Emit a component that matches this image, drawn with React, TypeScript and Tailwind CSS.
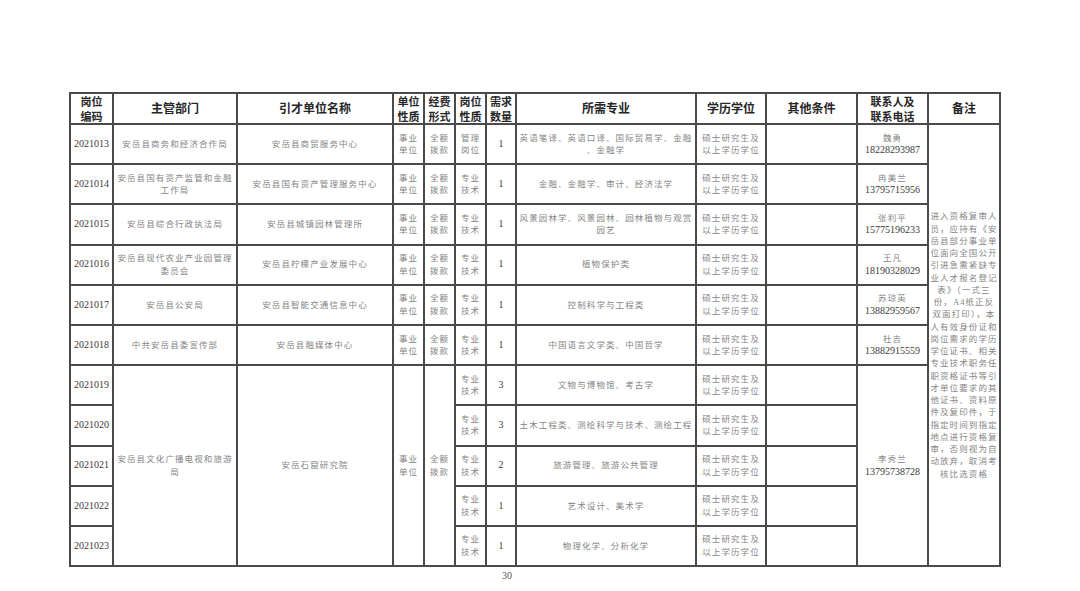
import React from 'react';

type Row = {
  code: string;
  dept?: React.ReactNode;
  unit?: string;
  kind: string;
  qty: string;
  major: React.ReactNode;
  contact?: [string, string];
};

const rows: Row[] = [
  { code: '2021013', dept: '安岳县商务和经济合作局', unit: '安岳县商贸服务中心', kind: '管理|岗位', qty: '1', major: <>英语笔译、英语口译、国际贸易学、金融<br />、金融学</>, contact: ['魏勇', '18228293987'] },
  { code: '2021014', dept: <>安岳县国有资产监管和金融<br />工作局</>, unit: '安岳县国有资产管理服务中心', kind: '专业|技术', qty: '1', major: '金融、金融学、审计、经济法学', contact: ['冉美兰', '13795715956'] },
  { code: '2021015', dept: '安岳县综合行政执法局', unit: '安岳县城镇园林管理所', kind: '专业|技术', qty: '1', major: <>风景园林学、风景园林、园林植物与观赏<br />园艺</>, contact: ['张利平', '15775196233'] },
  { code: '2021016', dept: <>安岳县现代农业产业园管理<br />委员会</>, unit: '安岳县柠檬产业发展中心', kind: '专业|技术', qty: '1', major: '植物保护类', contact: ['王凡', '18190328029'] },
  { code: '2021017', dept: '安岳县公安局', unit: '安岳县智能交通信息中心', kind: '专业|技术', qty: '1', major: '控制科学与工程类', contact: ['苏琼英', '13882959567'] },
  { code: '2021018', dept: '中共安岳县委宣传部', unit: '安岳县融媒体中心', kind: '专业|技术', qty: '1', major: '中国语言文学类、中国哲学', contact: ['杜吉', '13882915559'] },
  { code: '2021019', kind: '专业|技术', qty: '3', major: '文物与博物馆、考古学' },
  { code: '2021020', kind: '专业|技术', qty: '3', major: '土木工程类、测绘科学与技术、测绘工程' },
  { code: '2021021', kind: '专业|技术', qty: '2', major: '旅游管理、旅游公共管理' },
  { code: '2021022', kind: '专业|技术', qty: '1', major: '艺术设计、美术学' },
  { code: '2021023', kind: '专业|技术', qty: '1', major: '物理化学、分析化学' },
];

const remark = [
  '进入资格复审人', '员，应持有《安', '岳县部分事业单', '位面向全国公开', '引进急需紧缺专', '业人才报名登记',
  '表》（一式三', '份，A4纸正反', '双面打印），本', '人有效身份证和', '岗位需求的学历', '学位证书、相关',
  '专业技术职务任', '职资格证书等引', '才单位要求的其', '他证书、资料原', '件及复印件，于', '指定时间到指定',
  '地点进行资格复', '审，否则视为自', '动放弃，取消考', '核比选资格',
];

const td = 'border-2 border-[#4a4a4a] text-center align-middle p-0';
const cn = 'text-[8.5px] leading-[12.5px] tracking-[1.1px] text-[#858585]';
const num = 'text-[10px] leading-[12.5px] text-[#3a3a3a]';
const th = 'border-2 border-[#4a4a4a] text-center align-middle p-0 font-bold text-[11px] leading-[14.5px] text-[#262626]';

const Stack = ({ text }: { text: string }) => {
  const [a, b] = text.split('|');
  return (
    <div className={cn}>
      {a}
      <br />
      {b}
    </div>
  );
};

const Degree = () => (
  <div className={cn}>
    硕士研究生及
    <br />
    以上学历学位
  </div>
);

const Contact = ({ c }: { c: [string, string] }) => (
  <div>
    <div className={cn}>{c[0]}</div>
    <div className={num}>{c[1]}</div>
  </div>
);

export default function App() {
  return (
    <div className="w-[1080px] h-[591px] bg-white pt-[92px] pl-[69px] font-['Liberation_Serif','Noto_Sans_CJK_SC',serif]">
      <table className="table-fixed border-collapse w-[930px]">
        <colgroup>
          <col className="w-[43px]" />
          <col className="w-[124px]" />
          <col className="w-[156px]" />
          <col className="w-[31px]" />
          <col className="w-[31px]" />
          <col className="w-[31px]" />
          <col className="w-[30px]" />
          <col className="w-[180px]" />
          <col className="w-[70px]" />
          <col className="w-[91px]" />
          <col className="w-[71px]" />
          <col className="w-[72px]" />
        </colgroup>
        <thead className="font-['Noto_Sans_CJK_SC',sans-serif]">
          <tr className="h-[31px]">
            <th className={th}>岗位<br />编码</th>
            <th className={`${th} text-[12px]`}>主管部门</th>
            <th className={`${th} text-[12px]`}>引才单位名称</th>
            <th className={th}>单位<br />性质</th>
            <th className={th}>经费<br />形式</th>
            <th className={th}>岗位<br />性质</th>
            <th className={th}>需求<br />数量</th>
            <th className={`${th} text-[12px]`}>所需专业</th>
            <th className={`${th} text-[12px]`}>学历学位</th>
            <th className={`${th} text-[12px]`}>其他条件</th>
            <th className={th}>联系人及<br />联系电话</th>
            <th className={`${th} text-[12px]`}>备注</th>
          </tr>
        </thead>
        <tbody>
          {rows.map((r, i) => (
            <tr key={r.code} className="h-[40.2px]">
              <td className={td}>
                <div className={num}>{r.code}</div>
              </td>
              {i < 6 && (
                <>
                  <td className={td}><div className={cn}>{r.dept}</div></td>
                  <td className={td}><div className={cn}>{r.unit}</div></td>
                  <td className={td}><Stack text="事业|单位" /></td>
                  <td className={td}><Stack text="全额|拨款" /></td>
                </>
              )}
              {i === 6 && (
                <>
                  <td className={td} rowSpan={5}>
                    <div className={cn}>安岳县文化广播电视和旅游<br />局</div>
                  </td>
                  <td className={td} rowSpan={5}><div className={cn}>安岳石窟研究院</div></td>
                  <td className={td} rowSpan={5}><Stack text="事业|单位" /></td>
                  <td className={td} rowSpan={5}><Stack text="全额|拨款" /></td>
                </>
              )}
              <td className={td}><Stack text={r.kind} /></td>
              <td className={td}><div className={num}>{r.qty}</div></td>
              <td className={td}>
                <div className={`${cn} whitespace-nowrap overflow-hidden`}>{r.major}</div>
              </td>
              <td className={td}><Degree /></td>
              <td className={td}></td>
              {r.contact && (
                <td className={td}><Contact c={r.contact} /></td>
              )}
              {i === 6 && (
                <td className={td} rowSpan={5}><Contact c={['李秀兰', '13795738728']} /></td>
              )}
              {i === 0 && (
                <td className={td} rowSpan={11}>
                  <div className="text-[8.5px] leading-[12.25px] tracking-[1.1px] text-[#858585]">
                    {remark.map((l) => (
                      <div key={l}>{l}</div>
                    ))}
                  </div>
                </td>
              )}
            </tr>
          ))}
        </tbody>
      </table>
      <div className="pl-[433px] pt-[1px] text-[10px] text-[#555]">30</div>
    </div>
  );
}
